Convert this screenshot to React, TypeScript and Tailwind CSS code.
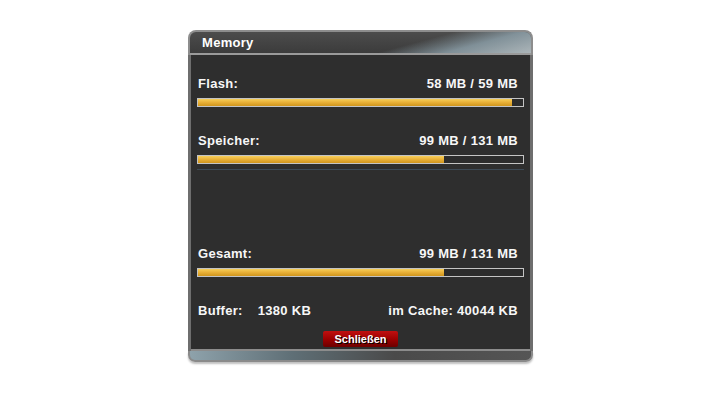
import React from "react";

type BarProps = {
  label: string;
  value: string;
  percent: number;
};

const UsageBar = ({ label, value, percent }: BarProps) => {
  return (
    <div className="flex flex-col">
      <div className="flex items-center justify-between px-[1px] pr-[6px] text-[13px] font-bold leading-[16px] tracking-[0.3px] text-[#f7f7f7]">
        <span>{label}</span>
        <span>{value}</span>
      </div>
      <div className="mt-[6px] h-[9px] border border-[#c4c4c4] bg-[#2c2c2c]">
        <div
          className="h-full bg-[linear-gradient(to_bottom,#f6cf5a_0%,#eab23a_45%,#d0951c_100%)]"
          style={{ width: `${percent}%` }}
        />
      </div>
    </div>
  );
};

export default function App() {
  return (
    <div className="flex h-[405px] w-[720px] justify-center bg-white pl-[1px] pt-[30px] font-['Liberation_Sans',Arial,sans-serif]">
      <div className="flex h-[332px] w-[345px] flex-col">
        {/* title bar */}
        <div className="relative h-[25px] overflow-hidden rounded-t-[8px] border-x-2 border-t-2 border-[#8d8d8d] bg-[linear-gradient(to_bottom,#4c4c4c,#3a3a3a)]">
          <div className="absolute inset-0 bg-[linear-gradient(165deg,transparent_62%,#8fa3ad_78%,#cdd8dc_100%)] opacity-80" />
          <div className="absolute bottom-0 left-0 right-0 h-[2px] bg-[#9a9a9a]" />
          <span className="relative ml-[12px] block pt-[3px] text-[13px] font-bold leading-[16px] tracking-[0.3px] text-white">
            Memory
          </span>
        </div>

        {/* body */}
        <div className="flex flex-1 flex-col border-x-[3px] border-[#6e6e6e] bg-[#2e2e2e] px-[6px] pt-[21px]">
          <UsageBar label="Flash:" value="58 MB / 59 MB" percent={96.6} />
          <div className="mt-[26px]">
            <UsageBar label="Speicher:" value="99 MB / 131 MB" percent={75.8} />
          </div>
          <div className="mt-[5px] h-px bg-[#3d4a56]" />
          <div className="mt-[76px]">
            <UsageBar label="Gesamt:" value="99 MB / 131 MB" percent={75.8} />
          </div>
          <div className="mt-[26px] flex items-center justify-between pr-[6px] text-[13px] font-bold leading-[16px] tracking-[0.3px] text-[#f7f7f7]">
            <span className="pl-[1px]">
              Buffer:<span className="ml-[15px]">1380 KB</span>
            </span>
            <span>im Cache: 40044 KB</span>
          </div>
          <div className="mt-[12px] flex justify-center">
            <button className="h-[16px] w-[75px] rounded-[2px] bg-[linear-gradient(to_bottom,#c01010,#9a0000_55%,#6c0000)] text-[11px] font-bold leading-[16px] text-white [text-shadow:1px_1px_0_#000]">
              Schließen
            </button>
          </div>
        </div>

        {/* bottom frame */}
        <div className="h-[2px] border-x-[3px] border-[#6e6e6e] bg-[#8c8c8c]" />
        <div className="h-[11px] rounded-b-[7px] border-x-2 border-b-2 border-[#8a8a8a] bg-[linear-gradient(to_right,#8ea2ab,#5f6f76_30%,#4a4a4a_60%,#555_100%)] shadow-[0_2px_2px_rgba(0,0,0,0.25)]" />
      </div>
    </div>
  );
}
